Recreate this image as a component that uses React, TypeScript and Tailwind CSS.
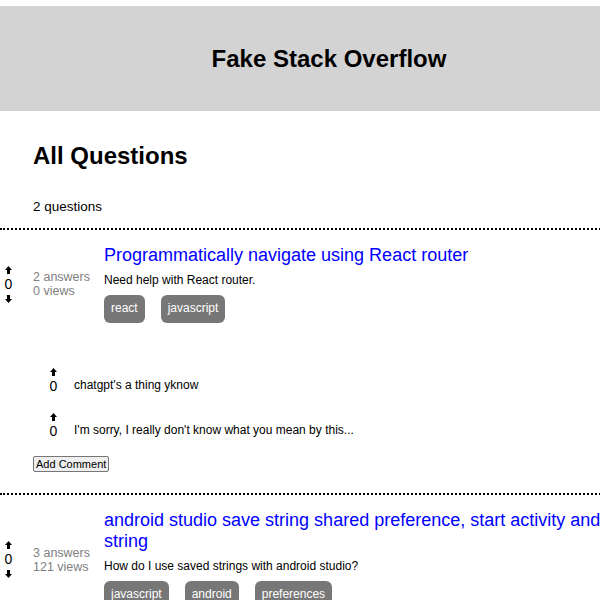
import React from 'react';

interface Comment {
  text: string;
  votes: number;
}

interface Question {
  title: string;
  summary: string;
  answers: number;
  views: number;
  votes: number;
  tags: string[];
  comments: Comment[];
}

const questions: Question[] = [
  {
    title: 'Programmatically navigate using React router',
    summary: 'Need help with React router.',
    answers: 2,
    views: 0,
    votes: 0,
    tags: ['react', 'javascript'],
    comments: [
      { text: "chatgpt's a thing yknow", votes: 0 },
      { text: "I'm sorry, I really don't know what you mean by this...", votes: 0 },
    ],
  },
  {
    title: 'android studio save string shared preference, start activity and load the saved string',
    summary: 'How do I use saved strings with android studio?',
    answers: 3,
    views: 121,
    votes: 0,
    tags: ['javascript', 'android', 'preferences'],
    comments: [],
  },
];

const Arrow = ({ down = false }: { down?: boolean }) => (
  <svg width="7" height="8" viewBox="0 0 7 8" className={down ? 'rotate-180' : ''}>
    <path d="M3.5 0 L7 4 H5 V8 H2 V4 H0 Z" fill="#000" />
  </svg>
);

const QuestionRow = ({ q }: { q: Question }) => (
  <div className="border-b-2 border-dotted border-black">
    <div className="flex items-center pt-[15px]">
      {/* votes */}
      <div className="w-[13px] ml-[2px] flex flex-col items-center text-[14px] leading-[21px]">
        <Arrow />
        <span>{q.votes}</span>
        <Arrow down />
      </div>
      {/* stats */}
      <div className="w-[71px] ml-[18px] text-[12.5px] leading-[14px] text-[#808080]">
        <div>{q.answers} answers</div>
        <div>{q.views} views</div>
      </div>
      {/* body */}
      <div className="w-[640px]">
        <div className="text-[18px] leading-[21px] text-[#0000ff]">{q.title}</div>
        <div className="text-[12px] leading-[14px] mt-[7px]">{q.summary}</div>
        <div className="flex gap-4 mt-[8px]">
          {q.tags.map((t) => (
            <span key={t} className="bg-[#777777] text-white text-[12px] rounded-[6px] px-[7px] h-[28px] flex items-center">
              {t}
            </span>
          ))}
        </div>
      </div>
    </div>
    {q.comments.length > 0 && (
      <div className="pt-[45px] pb-[21px]">
        {q.comments.map((c, i) => (
          <div key={i} className="flex items-end pl-[49px] mb-[17px]">
            <div className="w-[9px] flex flex-col items-center text-[14px] leading-[20px]">
              <Arrow />
              <span>{c.votes}</span>
            </div>
            <div className="ml-[16px] text-[12px] leading-[14px] pb-[4px]">{c.text}</div>
          </div>
        ))}
        <button className="ml-[33px] -mt-[2px] block text-[11px] leading-[12px] px-[2px] py-[1px] bg-[#efefef] border border-[#767676] rounded-[2px]">
          Add Comment
        </button>
      </div>
    )}
  </div>
);

export default function App() {
  return (
    <div className="w-full overflow-hidden bg-white text-black leading-[1.15] font-['Liberation_Sans',Arial,sans-serif]">
      <div className="w-[800px]">
        <div className="mt-[6px] w-[658px] h-[105px] bg-[#d3d3d3] flex items-center justify-center">
          <h1 className="text-[24px] leading-[28px] font-bold">Fake Stack Overflow</h1>
        </div>
        <div className="pl-[33px] pt-[31px]">
          <h2 className="text-[24px] leading-[28px] font-bold">All Questions</h2>
          <div className="text-[13.5px] leading-[16px] mt-[29px] pb-[13px]">{questions.length} questions</div>
        </div>
        <div className="border-b-2 border-dotted border-black" />
        {questions.map((q, i) => (
          <QuestionRow key={i} q={q} />
        ))}
      </div>
    </div>
  );
}
